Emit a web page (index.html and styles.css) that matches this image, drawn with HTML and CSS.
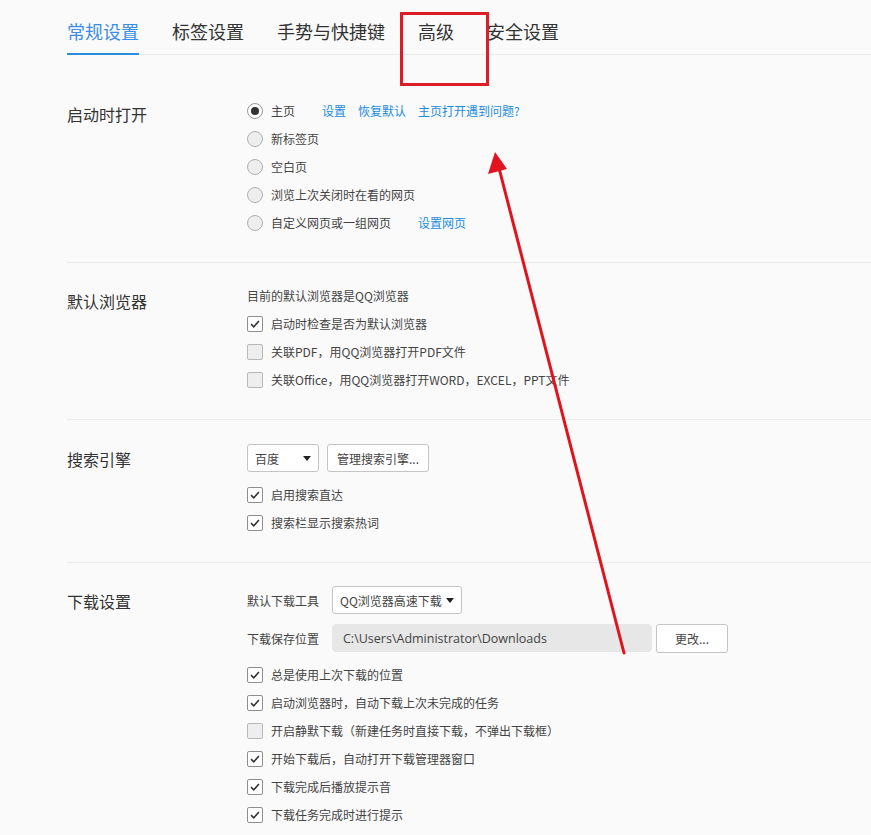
FILE: index.html
```html
<!DOCTYPE html>
<html lang="zh-CN">
<head>
<meta charset="utf-8">
<title>设置</title>
<link rel="stylesheet" href="styles.css">
</head>
<body>
<div class="page">
  <nav class="tabs">
    <div class="tab active">常规设置</div>
    <div class="tab">标签设置</div>
    <div class="tab">手势与快捷键</div>
    <div class="tab">高级</div>
    <div class="tab">安全设置</div>
  </nav>

  <section class="section s-start">
    <div class="label">启动时打开</div>
    <div class="content">
      <div class="row"><span class="radio checked"></span><span class="text">主页</span><a class="link first">设置</a><a class="link">恢复默认</a><a class="link">主页打开遇到问题?</a></div>
      <div class="row"><span class="radio"></span><span class="text">新标签页</span></div>
      <div class="row"><span class="radio"></span><span class="text">空白页</span></div>
      <div class="row"><span class="radio"></span><span class="text">浏览上次关闭时在看的网页</span></div>
      <div class="row"><span class="radio"></span><span class="text">自定义网页或一组网页</span><a class="link first">设置网页</a></div>
    </div>
  </section>

  <section class="section s-browser">
    <div class="label">默认浏览器</div>
    <div class="content">
      <div class="row intro"><span class="text">目前的默认浏览器是QQ浏览器</span></div>
      <div class="row"><span class="check checked"><svg viewBox="0 0 16 16"><polyline points="3.5,8.2 6.6,11.2 12.5,4.6"/></svg></span><span class="text">启动时检查是否为默认浏览器</span></div>
      <div class="row"><span class="check"></span><span class="text">关联PDF，用QQ浏览器打开PDF文件</span></div>
      <div class="row"><span class="check"></span><span class="text">关联Office，用QQ浏览器打开WORD，EXCEL，PPT文件</span></div>
    </div>
  </section>

  <section class="section s-search">
    <div class="label">搜索引擎</div>
    <div class="content">
      <div class="ctrl-row">
        <div class="select sel-engine"><span>百度</span><span class="caret"></span></div>
        <div class="btn btn-manage">管理搜索引擎...</div>
      </div>
      <div class="row"><span class="check checked"><svg viewBox="0 0 16 16"><polyline points="3.5,8.2 6.6,11.2 12.5,4.6"/></svg></span><span class="text">启用搜索直达</span></div>
      <div class="row"><span class="check checked"><svg viewBox="0 0 16 16"><polyline points="3.5,8.2 6.6,11.2 12.5,4.6"/></svg></span><span class="text">搜索栏显示搜索热词</span></div>
    </div>
  </section>

  <section class="section s-download">
    <div class="label">下载设置</div>
    <div class="content">
      <div class="ctrl-row">
        <span class="field-label">默认下载工具</span>
        <div class="select sel-tool"><span>QQ浏览器高速下载</span><span class="caret"></span></div>
      </div>
      <div class="ctrl-row">
        <span class="field-label">下载保存位置</span>
        <div class="path">C:\Users\Administrator\Downloads</div>
        <div class="btn btn-change">更改...</div>
      </div>
      <div class="row"><span class="check checked"><svg viewBox="0 0 16 16"><polyline points="3.5,8.2 6.6,11.2 12.5,4.6"/></svg></span><span class="text">总是使用上次下载的位置</span></div>
      <div class="row"><span class="check checked"><svg viewBox="0 0 16 16"><polyline points="3.5,8.2 6.6,11.2 12.5,4.6"/></svg></span><span class="text">启动浏览器时，自动下载上次未完成的任务</span></div>
      <div class="row"><span class="check"></span><span class="text">开启静默下载（新建任务时直接下载，不弹出下载框）</span></div>
      <div class="row"><span class="check checked"><svg viewBox="0 0 16 16"><polyline points="3.5,8.2 6.6,11.2 12.5,4.6"/></svg></span><span class="text">开始下载后，自动打开下载管理器窗口</span></div>
      <div class="row"><span class="check checked"><svg viewBox="0 0 16 16"><polyline points="3.5,8.2 6.6,11.2 12.5,4.6"/></svg></span><span class="text">下载完成后播放提示音</span></div>
      <div class="row"><span class="check checked"><svg viewBox="0 0 16 16"><polyline points="3.5,8.2 6.6,11.2 12.5,4.6"/></svg></span><span class="text">下载任务完成时进行提示</span></div>
    </div>
  </section>

  <svg class="annotation" viewBox="0 0 871 835" width="871" height="835">
    <rect x="401.5" y="13.5" width="86" height="71" fill="none" stroke="#dc1c26" stroke-width="3"/>
    <line x1="624" y1="653" x2="499" y2="168" stroke="#e0141e" stroke-width="3" stroke-linecap="round"/>
    <polygon points="495,152 488,174 507,169" fill="#e0141e"/>
  </svg>
</div>
</body>
</html>
```

FILE: styles.css
```css
html, body {
  margin: 0;
  padding: 0;
  background: #fafafa;
}

body {
  font-family: "Noto Sans CJK SC", "Microsoft YaHei", "Noto Sans", sans-serif;
  color: #444;
  font-size: 12px;
  overflow: hidden;
}

.page {
  position: relative;
  width: 871px;
  min-height: 835px;
}

.tabs {
  display: flex;
  gap: 33px;
  margin-left: 67px;
  border-bottom: 1px solid #e9e9e9;
}

.tab {
  font-size: 18px;
  line-height: 24px;
  padding: 19px 0 10px;
  color: #333;
  white-space: nowrap;
}

.tab.active {
  color: #3a8ee6;
  border-bottom: 2px solid #2b8de0;
  margin-bottom: -1px;
}

.section {
  display: flex;
  margin-left: 67px;
  border-top: 1px solid #ebebeb;
}

.tabs + .section {
  border-top: none;
}

.label {
  width: 180px;
  flex: none;
  font-size: 16px;
  line-height: 28px;
  color: #333;
}

.content {
  flex: 1;
  display: flex;
  flex-direction: column;
}

.s-start { padding: 42px 0 25px; }
.s-start .label { padding-top: 3px; }

.s-browser { padding: 18px 0 25px; }
.s-browser .label { padding-top: 6px; }
.s-browser .row.intro { height: 29px; }

.s-search { padding: 24px 0 25px; }
.s-search .label { padding-top: 1px; }

.s-download { padding: 23px 0 0; }
.s-download .label { padding-top: 1px; }

.row {
  height: 28px;
  display: flex;
  align-items: center;
  white-space: nowrap;
}

.text {
  line-height: 16px;
}

.radio {
  width: 14px;
  height: 14px;
  border: 1px solid #b0b0b0;
  border-radius: 50%;
  background: #eeeeee;
  margin-right: 8px;
  flex: none;
  position: relative;
}

.radio.checked {
  background: #ffffff;
  border-color: #9a9a9a;
}

.radio.checked::after {
  content: "";
  position: absolute;
  left: 3px;
  top: 3px;
  width: 8px;
  height: 8px;
  border-radius: 50%;
  background: #333;
}

.check {
  width: 14px;
  height: 14px;
  border: 1px solid #b8b8b8;
  border-radius: 2px;
  background: #eeeeee;
  margin-right: 8px;
  flex: none;
  display: flex;
}

.check.checked {
  background: #ffffff;
  border-color: #8f8f8f;
}

.check svg {
  width: 14px;
  height: 14px;
}

.check polyline {
  fill: none;
  stroke: #333;
  stroke-width: 1.8;
}

.link {
  color: #1c8ce0;
  margin-left: 12px;
  line-height: 16px;
}

.link.first {
  margin-left: 27px;
}

.ctrl-row {
  display: flex;
  align-items: center;
  height: 28px;
  margin-bottom: 9px;
}

.s-download .ctrl-row + .ctrl-row {
  margin-top: 1px;
}

.field-label {
  width: 85px;
  flex: none;
}

.select {
  box-sizing: border-box;
  height: 28px;
  border: 1px solid #c4c4c4;
  border-radius: 3px;
  background: #fff;
  display: flex;
  align-items: center;
  justify-content: space-between;
  padding: 0 7px 0 7px;
}

.sel-engine { width: 72px; }
.sel-tool { width: 130px; }

.caret {
  width: 0;
  height: 0;
  border-left: 4px solid transparent;
  border-right: 4px solid transparent;
  border-top: 5px solid #222;
}

.btn {
  box-sizing: border-box;
  height: 28px;
  border: 1px solid #c4c4c4;
  border-radius: 3px;
  background: #fff;
  display: flex;
  align-items: center;
  justify-content: center;
}

.btn-manage {
  width: 102px;
  margin-left: 8px;
}

.path {
  box-sizing: border-box;
  width: 320px;
  height: 28px;
  background: #e7e7e7;
  border-radius: 4px;
  padding-left: 11px;
  display: flex;
  align-items: center;
  font-family: "Open Sans", "Noto Sans", sans-serif;
  font-size: 12.5px;
  color: #444;
}

.btn-change {
  width: 72px;
  margin-left: 4px;
  height: 29px;
}

.annotation {
  position: absolute;
  left: 0;
  top: 0;
  pointer-events: none;
}
```
